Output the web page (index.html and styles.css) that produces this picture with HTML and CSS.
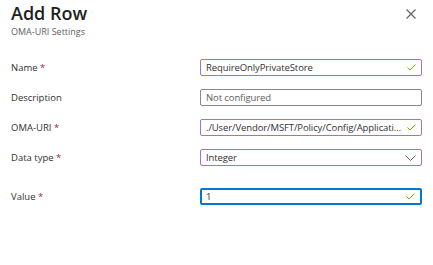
FILE: index.html
```html
<!DOCTYPE html>
<html lang="en">
<head>
  <meta charset="UTF-8">
  <title>Add Row</title>
  <link rel="stylesheet" href="styles.css">
</head>
<body>
  <header class="panel-head">
    <div>
      <h1>Add Row</h1>
      <div class="subtitle">OMA-URI Settings</div>
    </div>
    <button class="close-btn" aria-label="Close">
      <svg width="10" height="10" viewBox="0 0 10 10"><path d="M0.5 0.5L9.5 9.5M9.5 0.5L0.5 9.5" stroke="#605e5c" stroke-width="1.1" fill="none"/></svg>
    </button>
  </header>

  <div class="form">
    <div class="row">
      <label>Name <span class="req">*</span></label>
      <div class="field required">
        <span class="value">RequireOnlyPrivateStore</span>
        <svg class="check" width="9" height="7" viewBox="0 0 9 7"><path d="M0.5 3.5L3 6L8.5 0.5" stroke="#6bb700" stroke-width="1" fill="none"/></svg>
      </div>
    </div>
    <div class="row">
      <label>Description</label>
      <div class="field">
        <span class="value placeholder">Not configured</span>
      </div>
    </div>
    <div class="row">
      <label>OMA-URI <span class="req">*</span></label>
      <div class="field required">
        <span class="value">./User/Vendor/MSFT/Policy/Config/ApplicationManagement/RequirePrivateStoreOnly</span>
        <svg class="check" width="9" height="7" viewBox="0 0 9 7"><path d="M0.5 3.5L3 6L8.5 0.5" stroke="#6bb700" stroke-width="1" fill="none"/></svg>
      </div>
    </div>
    <div class="row">
      <label>Data type <span class="req">*</span></label>
      <div class="field required">
        <span class="value">Integer</span>
        <svg class="chevron" width="11" height="6" viewBox="0 0 11 6"><path d="M0.5 0.5L5.5 5.5L10.5 0.5" stroke="#605e5c" stroke-width="1" fill="none"/></svg>
      </div>
    </div>
    <div class="row row-gap">
      <label>Value <span class="req">*</span></label>
      <div class="field focused">
        <span class="value">1</span>
        <svg class="check" width="9" height="7" viewBox="0 0 9 7"><path d="M0.5 3.5L3 6L8.5 0.5" stroke="#6bb700" stroke-width="1" fill="none"/></svg>
      </div>
    </div>
  </div>
</body>
</html>
```

FILE: styles.css
```css
body {
  margin: 0;
  font-family: 'Open Sans', 'Noto Sans', sans-serif;
  background: #fff;
  color: #323130;
}
.panel-head {
  display: flex;
  justify-content: space-between;
  align-items: flex-start;
  padding: 1px 17px 0 11px;
}
h1 {
  margin: 0;
  font-size: 18px;
  font-weight: 600;
  line-height: 24px;
  color: #201f1e;
}
.subtitle {
  font-size: 9px;
  color: #605e5c;
  line-height: 12px;
  margin-top: 1px;
}
.close-btn {
  background: none;
  border: none;
  padding: 0;
  margin-top: 8px;
  cursor: pointer;
  display: flex;
}
.form {
  display: flex;
  flex-direction: column;
  gap: 13px;
  padding: 21px 10px 0 11px;
}
.row {
  display: grid;
  grid-template-columns: 189px 222px;
  align-items: center;
}
.row-gap {
  margin-top: 9px;
}
label {
  font-size: 9.5px;
}
.req {
  color: #a4262c;
}
.field {
  height: 17px;
  box-sizing: border-box;
  border: 1px solid #8a8886;
  border-radius: 2px;
  display: flex;
  align-items: center;
  padding: 0 5px 0 5px;
  gap: 4px;
}
.field.required {
  border-color: #a56fcf;
}
.field.focused {
  border: 2px solid #0078d4;
  padding-left: 4px;
}
.value {
  flex: 1;
  font-size: 9.5px;
  letter-spacing: -0.1px;
  white-space: nowrap;
  overflow: hidden;
  text-overflow: ellipsis;
}
.placeholder {
  color: #605e5c;
}
.check, .chevron {
  flex: none;
}
```
